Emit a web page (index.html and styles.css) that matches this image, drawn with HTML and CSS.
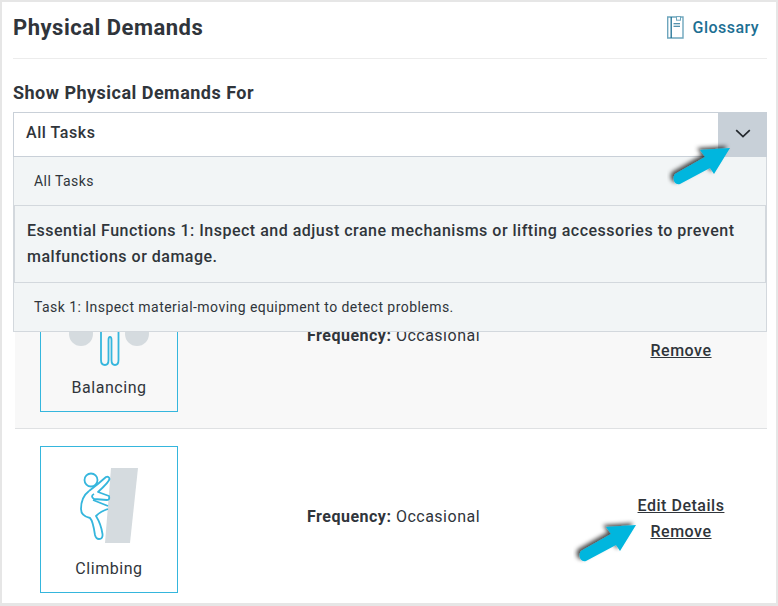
FILE: index.html
```html
<!DOCTYPE html>
<html lang="en">
<head>
<meta charset="utf-8">
<title>Physical Demands</title>
<link rel="stylesheet" href="styles.css">
</head>
<body>
<main class="panel">
  <header class="head">
    <h1 class="title">Physical Demands</h1>
    <a class="glossary" href="#">
      <svg class="glossary-icon" width="18" height="23" viewBox="0 0 18 23" fill="none">
        <path d="M1.7 1H17V22H1.7Z" stroke="#6ea6bd" stroke-width="1.4"/>
        <path d="M5.2 1V22" stroke="#1c6f93" stroke-width="1.3"/>
        <path d="M7.5 7.7H14M7.5 10.2H14" stroke="#1c6f93" stroke-width="1.1"/>
        <rect x="10.5" y="0.6" width="4" height="3.6" fill="#fff" stroke="#6ea6bd"/>
      </svg>
      <span>Glossary</span>
    </a>
  </header>

  <h2 class="show-label">Show Physical Demands For</h2>

  <div class="select">
    <div class="select-bar">
      <span class="select-value">All Tasks</span>
      <span class="select-btn">
        <svg class="chevron" width="16" height="9" viewBox="0 0 16 9" fill="none"><path d="M1.2 1.2L8 7.6L14.8 1.2" stroke="#23282d" stroke-width="1.7"/></svg>
      </span>
    </div>
    <ul class="menu">
      <li class="opt opt-small">All Tasks</li>
      <li class="opt opt-active">Essential Functions 1: Inspect and adjust crane mechanisms or lifting accessories to prevent malfunctions or damage.</li>
      <li class="opt opt-small">Task 1: Inspect material-moving equipment to detect problems.</li>
    </ul>
  </div>

  <section class="list">
    <article class="row row-alt">
      <div class="card">
        <svg class="card-icon" width="80" height="80" viewBox="0 0 80 80" fill="none">
          <circle cx="12" cy="48" r="12" fill="#d5dbdf"/>
          <circle cx="68" cy="48" r="12" fill="#d5dbdf"/>
          <path d="M32 30V74Q32 79 36 79Q39.5 79 39.5 74V54Q39.5 51 41 51Q42.5 51 42.5 54V74Q42.5 79 46 79Q49.5 79 49.5 74V30" stroke="#35b6dd" stroke-width="1.8"/>
        </svg>
        <span class="card-name">Balancing</span>
      </div>
      <div class="freq"><b>Frequency:</b> Occasional</div>
      <div class="actions"><a href="#">Edit Details</a><a href="#">Remove</a></div>
    </article>
    <article class="row">
      <div class="card">
        <svg class="card-icon" width="80" height="80" viewBox="0 0 80 80" fill="none">
          <path d="M42 1H69L61 76H36Z" fill="#d5dbdf"/>
          <circle cx="22" cy="13" r="6.5" stroke="#35b6dd" stroke-width="1.8"/>
          <path d="M20 24Q28 18 37 10Q40 9 40.5 12Q40 15 29 25L40 29Q41 33 38 33L25 32Q21 29 25 27" stroke="#35b6dd" stroke-width="1.8" stroke-linejoin="round"/>
          <path d="M20 24Q12 30 12 42Q12 49 21 51Q24 54 26 68Q27 72 30 72Q34 72 33.5 67Q32 57 27 49Q32 44 39 42M24 33L39 39" stroke="#35b6dd" stroke-width="1.8" stroke-linejoin="round"/>
        </svg>
        <span class="card-name">Climbing</span>
      </div>
      <div class="freq"><b>Frequency:</b> Occasional</div>
      <div class="actions"><a href="#">Edit Details</a><a href="#">Remove</a></div>
    </article>
  </section>

  <svg class="arrow arrow-top" width="70" height="60" viewBox="0 0 70 60">
    <defs><filter id="sh" x="-20%" y="-30%" width="140%" height="160%"><feDropShadow dx="-3" dy="-2" stdDeviation="2" flood-color="#000" flood-opacity=".7"/></filter></defs>
    <path d="M8 41L38 24L33 17L63 15L47 41L43 35L13 51Q9 52 7 48Q6 43 8 41Z" fill="#00b6de" filter="url(#sh)"/>
  </svg>
  <svg class="arrow arrow-bottom" width="70" height="60" viewBox="0 0 70 60">
    <path d="M8 41L38 24L33 17L63 15L47 41L43 35L13 51Q9 52 7 48Q6 43 8 41Z" fill="#00b6de" filter="url(#sh)"/>
  </svg>
</main>
</body>
</html>
```
FILE: styles.css
```css
* { box-sizing: border-box; }
html, body { margin: 0; height: 100%; }
body {
  background: #e6e6e6;
  padding: 2px;
  font-family: Roboto, "Liberation Sans", sans-serif;
  color: #30353b;
  overflow: hidden;
}
.panel {
  position: relative;
  width: 774px;
  height: 601px;
  background: #fff;
  overflow: hidden;
}
.head {
  display: flex;
  justify-content: space-between;
  align-items: center;
  height: 57px;
  margin: 0 9px 0 11px;
  padding-bottom: 6px;
  border-bottom: 1px solid #ececec;
}
.title {
  margin: 0;
  font-size: 22px;
  font-weight: 700;
  letter-spacing: .5px;
}
.glossary {
  display: flex;
  align-items: center;
  gap: 9px;
  padding-right: 8px;
  color: #1c6f93;
  font-size: 16px;
  font-weight: 500;
  letter-spacing: .45px;
  text-decoration: none;
}
.show-label {
  margin: 24px 0 0 11px;
  height: 29px;
  font-size: 18px;
  line-height: 20px;
  font-weight: 700;
  letter-spacing: .48px;
}
.select {
  position: relative;
  margin: 0 9px 0 11px;
}
.select-bar {
  display: flex;
  height: 45px;
  border: 1px solid #c9d0d8;
  border-right: 0;
  background: #fff;
}
.select-value {
  flex: 1;
  padding-left: 12px;
  font-size: 16px;
  line-height: 39px;
  font-weight: 500;
  letter-spacing: .55px;
}
.select-btn {
  display: flex;
  align-items: center;
  justify-content: center;
  width: 49px;
  margin: -1px 0;
  background: #c8d0d8;
}
.chevron { margin-bottom: 2px; }
.menu {
  position: absolute;
  top: 45px;
  left: 0;
  right: 0;
  z-index: 2;
  margin: 0;
  padding: 0;
  list-style: none;
  background: #f2f5f6;
  border: 1px solid #d3d8dd;
  border-top: 0;
}
.opt { padding: 0 20px; }
.opt-small {
  height: 48px;
  font-size: 14px;
  line-height: 49px;
  letter-spacing: .45px;
}
.opt-active {
  height: 78px;
  padding: 12px 12px 0;
  border: 1px solid #d3d8dd;
  font-size: 16px;
  line-height: 26px;
  font-weight: 500;
  letter-spacing: .5px;
}
.list { margin: 91px 9px 0 13px; }
.row {
  display: flex;
  align-items: center;
  height: 181px;
  padding-left: 25px;
  border-bottom: 1px solid #dfe1e3;
}
.row-alt { background: #f8f8f8; }
.card {
  display: flex;
  flex-direction: column;
  align-items: center;
  width: 138px;
  height: 147px;
  border: 1px solid #35b6dd;
}
.card-icon { margin-top: 20px; }
.card-name {
  margin-top: 12px;
  font-size: 16px;
  letter-spacing: .55px;
}
.freq {
  margin-left: 129px;
  width: 300px;
  padding-bottom: 6px;
  font-size: 16px;
  letter-spacing: .5px;
}
.freq b { font-weight: 700; letter-spacing: .5px; }
.actions {
  display: flex;
  flex-direction: column;
  align-items: center;
  gap: 7px;
  width: 160px;
  margin-left: -6px;
  padding-bottom: 2px;
}
.actions a {
  color: #30353b;
  font-size: 16px;
  line-height: 19px;
  font-weight: 500;
  letter-spacing: .52px;
}
.arrow { position: absolute; z-index: 3; }
.arrow-top { left: 665px; top: 131px; }
.arrow-bottom { left: 571px; top: 508px; }
```
